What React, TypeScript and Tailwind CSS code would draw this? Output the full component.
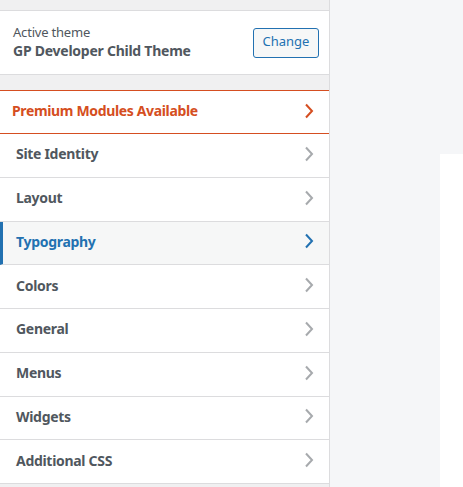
import React from "react";

const Chevron = ({ color }: { color: string }) => (
  <svg width="10" height="16" viewBox="0 0 10 16" className="shrink-0">
    <polyline points="2,1.5 8,8 2,14.5" fill="none" stroke={color} strokeWidth="2" strokeLinejoin="miter" />
  </svg>
);

const items = ["Site Identity", "Layout", "Typography", "Colors", "General", "Menus", "Widgets", "Additional CSS"];

export default function App() {
  return (
    <div className="flex w-[463px] h-[487px] overflow-hidden bg-[#f5f6f8]" style={{ fontFamily: '"Noto Sans", "Open Sans", sans-serif' }}>
      <div className="w-[330px] shrink-0 h-full bg-[#f0f0f1] border-r border-[#dcdcde] flex flex-col">
        <div className="h-[10px]" />
        <div className="h-[65px] bg-white border-y border-[#dcdcde] flex items-center justify-between pl-[13px] pr-[10px]">
          <div className="flex flex-col text-[#50575e] pb-[2px]">
            <span className="text-[13px] leading-[17px] tracking-[-0.2px]">Active theme</span>
            <span className="text-[14px] font-bold leading-[19px] tracking-[-0.25px]">GP Developer Child Theme</span>
          </div>
          <button className="h-[30px] w-[66px] rounded-[3px] border border-[#2271b1] bg-[#f6f7f7] text-[#2271b1] text-[13px] pb-[1px]">Change</button>
        </div>
        <div className="h-[15px]" />
        <div className="h-[44px] bg-white border-y border-[#d54e21] flex items-center justify-between pl-[12px] pr-[15px] pb-[3px]">
          <span className="text-[14px] font-bold text-[#d54e21] tracking-[-0.35px]">Premium Modules Available</span>
          <Chevron color="#d54e21" />
        </div>
        {items.map((it) => {
          const active = it === "Typography";
          return (
            <div
              key={it}
              className={`h-[43.75px] shrink-0 border-b border-[#dcdcde] flex items-center justify-between pr-[15px] pb-[3px] ${active ? "bg-[#f6f7f7] border-l-[3px] border-l-[#2271b1] pl-[13px]" : "bg-white pl-[16px]"}`}
            >
              <span className={`text-[14px] font-bold tracking-[-0.3px] ${active ? "text-[#2271b1]" : "text-[#50575e]"}`}>{it}</span>
              <Chevron color={active ? "#2271b1" : "#a7aaad"} />
            </div>
          );
        })}
      </div>
      <div className="flex-1 flex flex-col">
        <div className="h-[154px]" />
        <div className="flex-1 flex">
          <div className="w-[110px]" />
          <div className="flex-1 bg-white" />
        </div>
      </div>
    </div>
  );
}
